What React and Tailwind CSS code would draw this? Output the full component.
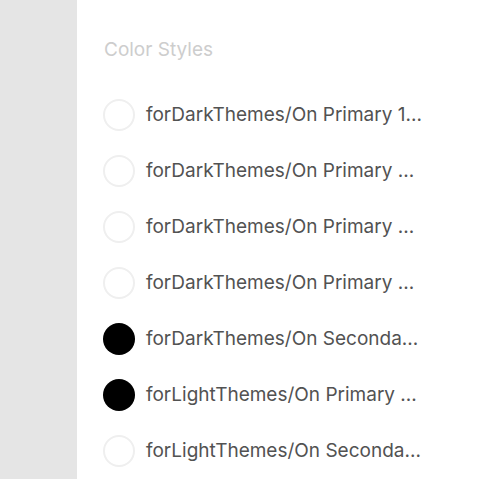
const styles = [
  { name: 'forDarkThemes/On Primary 1...', dark: false },
  { name: 'forDarkThemes/On Primary ...', dark: false },
  { name: 'forDarkThemes/On Primary ...', dark: false },
  { name: 'forDarkThemes/On Primary ...', dark: false },
  { name: 'forDarkThemes/On Seconda...', dark: true },
  { name: 'forLightThemes/On Primary ...', dark: true },
  { name: 'forLightThemes/On Seconda...', dark: false },
];

export default function App() {
  return (
    <div className="flex h-[479px] w-full overflow-hidden bg-white font-['Inter',sans-serif]">
      {/* Sidebar */}
      <div className="w-[77px] shrink-0 bg-[#e5e5e5]" />

      {/* Panel */}
      <div className="flex-1 pl-[26px] pt-[38px]">
        <h2 className="pl-[1px] text-[19px] leading-[24px] text-[#cdcdcd]">Color Styles</h2>
        <ul className="mt-[37px] flex flex-col gap-[24px]">
          {styles.map((s, i) => (
            <li key={i} className="flex h-[32px] items-center gap-[11px]">
              <span
                className={`h-[32px] w-[32px] shrink-0 rounded-full ${
                  s.dark ? 'bg-black' : 'border-2 border-[#efefef] bg-white'
                }`}
              />
              <span className="whitespace-nowrap pt-[1px] text-[19px] text-[#525252]">{s.name}</span>
            </li>
          ))}
        </ul>
      </div>
    </div>
  );
}
